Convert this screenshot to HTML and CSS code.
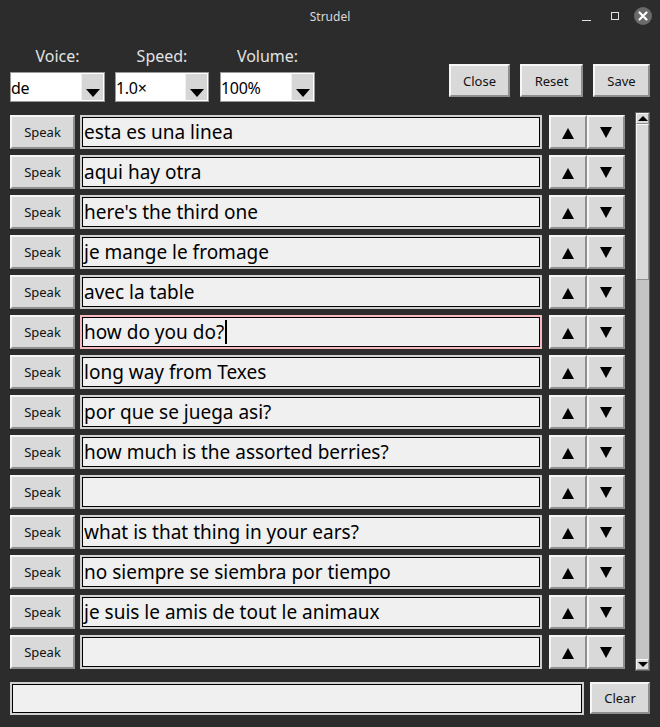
FILE: index.html
```html
<!DOCTYPE html>
<html>
<head>
<meta charset="utf-8">
<title>Strudel</title>
<link rel="stylesheet" href="styles.css">
</head>
<body>
<div class="window">
  <div class="titlebar">
    <span class="title">Strudel</span>
    <div class="wm">
      <span class="wm-min"></span>
      <span class="wm-max"></span>
      <span class="wm-close"><svg width="18" height="18" viewBox="0 0 18 18"><path d="M5.5 5.5 L12.5 12.5 M12.5 5.5 L5.5 12.5" stroke="#fff" stroke-width="2.2" stroke-linecap="round"/></svg></span>
    </div>
  </div>

  <div class="toolbar">
    <div class="field f-voice">
      <label>Voice:</label>
      <div class="combo"><span class="combo-text">de</span><span class="combo-btn"><i class="tri-down"></i></span></div>
    </div>
    <div class="field f-speed">
      <label>Speed:</label>
      <div class="combo"><span class="combo-text">1.0×</span><span class="combo-btn"><i class="tri-down"></i></span></div>
    </div>
    <div class="field f-volume">
      <label>Volume:</label>
      <div class="combo"><span class="combo-text">100%</span><span class="combo-btn"><i class="tri-down"></i></span></div>
    </div>
    <div class="actions">
      <button class="btn b-close">Close</button>
      <button class="btn b-reset">Reset</button>
      <button class="btn b-save">Save</button>
    </div>
  </div>

  <div class="main">
    <div class="rows">
      <div class="row"><button class="btn speak">Speak</button><div class="entry">esta es una linea</div><button class="btn arrow"><i class="tri-up-lg"></i></button><button class="btn arrow"><i class="tri-down-lg"></i></button></div>
      <div class="row"><button class="btn speak">Speak</button><div class="entry">aqui hay otra</div><button class="btn arrow"><i class="tri-up-lg"></i></button><button class="btn arrow"><i class="tri-down-lg"></i></button></div>
      <div class="row"><button class="btn speak">Speak</button><div class="entry">here's the third one</div><button class="btn arrow"><i class="tri-up-lg"></i></button><button class="btn arrow"><i class="tri-down-lg"></i></button></div>
      <div class="row"><button class="btn speak">Speak</button><div class="entry">je mange le fromage</div><button class="btn arrow"><i class="tri-up-lg"></i></button><button class="btn arrow"><i class="tri-down-lg"></i></button></div>
      <div class="row"><button class="btn speak">Speak</button><div class="entry">avec la table</div><button class="btn arrow"><i class="tri-up-lg"></i></button><button class="btn arrow"><i class="tri-down-lg"></i></button></div>
      <div class="row"><button class="btn speak">Speak</button><div class="entry focused">how do you do?<span class="caret"></span></div><button class="btn arrow"><i class="tri-up-lg"></i></button><button class="btn arrow"><i class="tri-down-lg"></i></button></div>
      <div class="row"><button class="btn speak">Speak</button><div class="entry">long way from Texes</div><button class="btn arrow"><i class="tri-up-lg"></i></button><button class="btn arrow"><i class="tri-down-lg"></i></button></div>
      <div class="row"><button class="btn speak">Speak</button><div class="entry">por que se juega asi?</div><button class="btn arrow"><i class="tri-up-lg"></i></button><button class="btn arrow"><i class="tri-down-lg"></i></button></div>
      <div class="row"><button class="btn speak">Speak</button><div class="entry">how much is the assorted berries?</div><button class="btn arrow"><i class="tri-up-lg"></i></button><button class="btn arrow"><i class="tri-down-lg"></i></button></div>
      <div class="row"><button class="btn speak">Speak</button><div class="entry"></div><button class="btn arrow"><i class="tri-up-lg"></i></button><button class="btn arrow"><i class="tri-down-lg"></i></button></div>
      <div class="row"><button class="btn speak">Speak</button><div class="entry">what is that thing in your ears?</div><button class="btn arrow"><i class="tri-up-lg"></i></button><button class="btn arrow"><i class="tri-down-lg"></i></button></div>
      <div class="row"><button class="btn speak">Speak</button><div class="entry">no siempre se siembra por tiempo</div><button class="btn arrow"><i class="tri-up-lg"></i></button><button class="btn arrow"><i class="tri-down-lg"></i></button></div>
      <div class="row"><button class="btn speak">Speak</button><div class="entry">je suis le amis de tout le animaux</div><button class="btn arrow"><i class="tri-up-lg"></i></button><button class="btn arrow"><i class="tri-down-lg"></i></button></div>
      <div class="row"><button class="btn speak">Speak</button><div class="entry"></div><button class="btn arrow"><i class="tri-up-lg"></i></button><button class="btn arrow"><i class="tri-down-lg"></i></button></div>
    </div>
    <div class="scrollbar">
      <div class="sb-btn"><i class="tri-up-sm"></i></div>
      <div class="sb-thumb"></div>
      <div class="sb-trough"></div>
      <div class="sb-btn"><i class="tri-down-sm"></i></div>
    </div>
  </div>

  <div class="footer">
    <div class="entry wide"></div>
    <button class="btn b-clear">Clear</button>
  </div>
</div>
</body>
</html>
```

FILE: styles.css
```css
* { box-sizing: border-box; }
html, body { margin: 0; padding: 0; }
body {
  background: #2c2c2c;
  font-family: "Noto Sans", "Open Sans", sans-serif;
  width: 660px;
  height: 727px;
  overflow: hidden;
}
.window { width: 660px; height: 727px; display: flex; flex-direction: column; }

.titlebar {
  height: 34px;
  position: relative;
  display: flex;
  align-items: center;
  justify-content: center;
}
.title { color: #d8d8d8; font-size: 12px; margin-top: -2px; }
.wm {
  position: absolute;
  right: 8px;
  top: 7px;
  display: flex;
  align-items: center;
}
.wm-min { display: block; width: 9px; height: 1px; background: #e0e0e0; margin: 9px 20px 0 0; }
.wm-max { width: 8px; height: 8px; border: 1px solid #e0e0e0; display: block; margin-right: 15px; }
.wm-close {
  width: 18px; height: 18px; border-radius: 50%;
  background: #6a6a6a; display: block;
}
.wm-close svg { display: block; }

.toolbar {
  height: 68px;
  display: flex;
  padding: 12px 10px 0 10px;
}
.field { display: flex; flex-direction: column; align-items: center; }
.field label {
  color: #e2e2e2;
  font-size: 16px;
  line-height: 20px;
  height: 20px;
}
.f-voice { width: 95px; margin-right: 10px; }
.f-speed { width: 94px; margin-right: 11px; }
.f-volume { width: 95px; }
.combo {
  margin-top: 6px;
  width: 100%;
  height: 30px;
  background: #ffffff;
  border: 1px solid #9a9a9a;
  display: flex;
  align-items: stretch;
}
.combo-text {
  flex: 1;
  font-size: 16px;
  color: #000;
  line-height: 30px;
  padding-left: 0;
  letter-spacing: -0.3px;
}
.combo-btn {
  width: 22px;
  margin: 1px;
  background: #d6d6d6;
  border-left: 1px solid #f0f0f0;
  display: flex;
  align-items: flex-end;
  justify-content: center;
  padding-bottom: 3px;
}
.tri-down {
  display: block;
  width: 0; height: 0;
  border-left: 7.5px solid transparent;
  border-right: 7.5px solid transparent;
  border-top: 8px solid #000;
}

.actions {
  margin-left: auto;
  display: flex;
  gap: 10px;
  margin-top: 18px;
  align-self: flex-start;
}
.btn {
  font-family: "Noto Sans", "Open Sans", sans-serif;
  font-size: 13px;
  color: #111;
  background: #d9d9d9;
  border: 2px solid;
  border-color: #f6f6f6 #8e8e8e #8e8e8e #f6f6f6;
  padding: 0;
  margin: 0;
  display: flex;
  align-items: center;
  justify-content: center;
}
.b-close { width: 61px; height: 33px; }
.b-reset { width: 63px; height: 33px; }
.b-save { width: 57px; height: 33px; }

.main {
  margin-top: 10px;
  height: 559px;
  display: flex;
  padding-left: 10px;
}
.rows {
  width: 615px;
  padding-top: 3px;
  display: flex;
  flex-direction: column;
  gap: 6px;
}
.row {
  height: 34px;
  display: flex;
  align-items: stretch;
}
.speak { width: 65px; margin-right: 5px; }
.entry {
  background: #f0f0f0;
  border: 2px solid #cfcfcf;
  box-shadow: inset 0 0 0 1px #000;
  font-size: 19px;
  color: #000;
  padding-left: 2px;
  display: flex;
  align-items: center;
  white-space: nowrap;
  overflow: hidden;
}
.row .entry { width: 462px; margin-right: 7px; }
.entry.focused { border-color: #f7b8be; }
.caret { display: inline-block; width: 2px; height: 24px; background: #000; margin-left: 1px; }
.arrow { width: 38px; }
.tri-up-lg {
  display: block; width: 0; height: 0;
  border-left: 6px solid transparent;
  border-right: 6px solid transparent;
  border-bottom: 11px solid #000;
  margin-top: 2px;
}
.tri-down-lg {
  display: block; width: 0; height: 0;
  border-left: 6px solid transparent;
  border-right: 6px solid transparent;
  border-top: 11px solid #000;
}

.scrollbar {
  margin-left: 10px;
  width: 15px;
  height: 559px;
  background: #c4c4c4;
  border: 1px solid #5e5e5e;
  display: flex;
  flex-direction: column;
}
.sb-btn {
  height: 11px;
  background: #d9d9d9;
  border: 1px solid;
  border-color: #f6f6f6 #8e8e8e #8e8e8e #f6f6f6;
  display: flex;
  align-items: center;
  justify-content: center;
}
.sb-thumb {
  height: 156px;
  background: #d9d9d9;
  border: 1px solid;
  border-color: #f6f6f6 #8e8e8e #8e8e8e #f6f6f6;
}
.sb-trough { flex: 1; }
.tri-up-sm {
  display: block; width: 0; height: 0;
  border-left: 5px solid transparent;
  border-right: 5px solid transparent;
  border-bottom: 5px solid #000;
}
.tri-down-sm {
  display: block; width: 0; height: 0;
  border-left: 5px solid transparent;
  border-right: 5px solid transparent;
  border-top: 5px solid #000;
}

.footer {
  margin-top: 11px;
  display: flex;
  padding: 0 10px;
  gap: 6px;
}
.entry.wide { width: 574px; height: 33px; }
.b-clear { width: 60px; height: 32px; }
```
